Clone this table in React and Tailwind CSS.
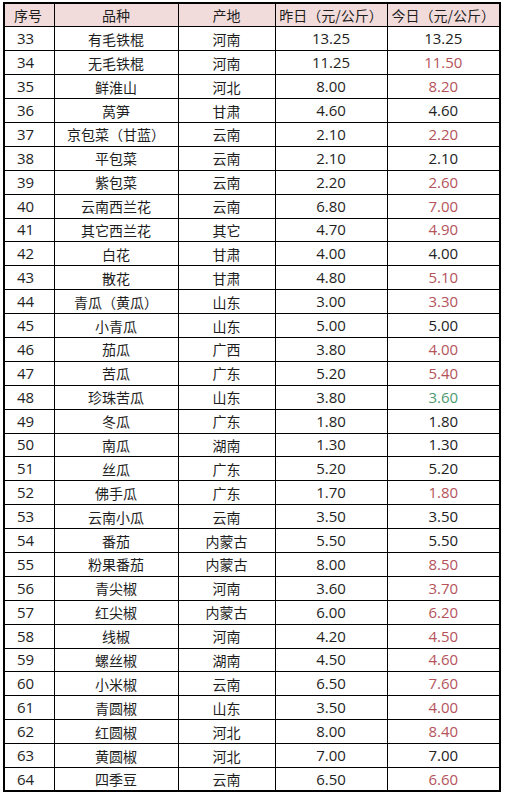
const rows = [
  ['33', '有毛铁棍', '河南', '13.25', '13.25', ''],
  ['34', '无毛铁棍', '河南', '11.25', '11.50', 'r'],
  ['35', '鲜淮山', '河北', '8.00', '8.20', 'r'],
  ['36', '莴笋', '甘肃', '4.60', '4.60', ''],
  ['37', '京包菜（甘蓝）', '云南', '2.10', '2.20', 'r'],
  ['38', '平包菜', '云南', '2.10', '2.10', ''],
  ['39', '紫包菜', '云南', '2.20', '2.60', 'r'],
  ['40', '云南西兰花', '云南', '6.80', '7.00', 'r'],
  ['41', '其它西兰花', '其它', '4.70', '4.90', 'r'],
  ['42', '白花', '甘肃', '4.00', '4.00', ''],
  ['43', '散花', '甘肃', '4.80', '5.10', 'r'],
  ['44', '青瓜（黄瓜）', '山东', '3.00', '3.30', 'r'],
  ['45', '小青瓜', '山东', '5.00', '5.00', ''],
  ['46', '茄瓜', '广西', '3.80', '4.00', 'r'],
  ['47', '苦瓜', '广东', '5.20', '5.40', 'r'],
  ['48', '珍珠苦瓜', '山东', '3.80', '3.60', 'g'],
  ['49', '冬瓜', '广东', '1.80', '1.80', ''],
  ['50', '南瓜', '湖南', '1.30', '1.30', ''],
  ['51', '丝瓜', '广东', '5.20', '5.20', ''],
  ['52', '佛手瓜', '广东', '1.70', '1.80', 'r'],
  ['53', '云南小瓜', '云南', '3.50', '3.50', ''],
  ['54', '番茄', '内蒙古', '5.50', '5.50', ''],
  ['55', '粉果番茄', '内蒙古', '8.00', '8.50', 'r'],
  ['56', '青尖椒', '河南', '3.60', '3.70', 'r'],
  ['57', '红尖椒', '内蒙古', '6.00', '6.20', 'r'],
  ['58', '线椒', '河南', '4.20', '4.50', 'r'],
  ['59', '螺丝椒', '湖南', '4.50', '4.60', 'r'],
  ['60', '小米椒', '云南', '6.50', '7.60', 'r'],
  ['61', '青圆椒', '山东', '3.50', '4.00', 'r'],
  ['62', '红圆椒', '河北', '8.00', '8.40', 'r'],
  ['63', '黄圆椒', '河北', '7.00', '7.00', ''],
  ['64', '四季豆', '云南', '6.50', '6.60', 'r'],
];

const tone = { '': 'text-[#222]', r: 'text-[#b4535a]', g: 'text-[#4e9a72]' };

const cell = 'border border-black h-[23.9px] p-0 leading-none';
const num = "font-['Open_Sans','Noto_Sans_CJK_SC',sans-serif] text-[15px]";

export default function App() {
  return (
    <div className="bg-white w-[505px] h-[798px] pt-[2px] pl-[3px]">
      <table className="w-[496px] table-fixed border-collapse border-2 border-black text-[14px] text-[#1e1e1e] font-['Noto_Sans_CJK_SC',sans-serif]">
        <colgroup>
          <col className="w-[50px]" />
          <col className="w-[124px]" />
          <col className="w-[97px]" />
          <col className="w-[112px]" />
          <col className="w-[113px]" />
        </colgroup>
        <thead>
          <tr className="bg-[#f2dcdb]">
            <th className={`${cell} font-normal text-left pl-[9px]`}>序号</th>
            <th className={`${cell} font-normal text-center`}>品种</th>
            <th className={`${cell} font-normal text-center`}>产地</th>
            <th className={`${cell} font-normal text-center`}>昨日（元/公斤）</th>
            <th className={`${cell} font-normal text-center`}>今日（元/公斤）</th>
          </tr>
        </thead>
        <tbody>
          {rows.map(([id, name, place, prev, today, t]) => (
            <tr key={id}>
              <td className={`${cell} ${num} text-left pl-[12px]`}>{id}</td>
              <td className={`${cell} text-center`}>{name}</td>
              <td className={`${cell} text-center`}>{place}</td>
              <td className={`${cell} ${num} text-center`}>{prev}</td>
              <td className={`${cell} ${num} text-center ${tone[t]}`}>{today}</td>
            </tr>
          ))}
        </tbody>
      </table>
    </div>
  );
}
